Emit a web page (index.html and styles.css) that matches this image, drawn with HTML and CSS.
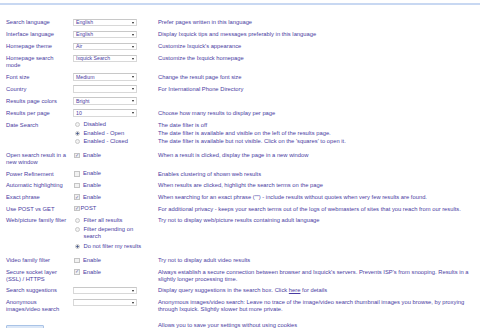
FILE: index.html
```html
<!DOCTYPE html>
<html lang="en">
<head>
    <meta charset="UTF-8">
    <title>Ixquick Settings</title>
    <link rel="stylesheet" href="styles.css">
</head>
<body>
    <div class="topline"></div>
    <div class="settings">
        <div class="row">
            <div class="label">Search language</div>
            <div class="control"><div class="select"><span>English</span><span class="arrow"></span></div></div>
            <div class="desc">Prefer pages written in this language</div>
        </div>
        <div class="row">
            <div class="label">Interface language</div>
            <div class="control"><div class="select"><span>English</span><span class="arrow"></span></div></div>
            <div class="desc">Display Ixquick tips and messages preferably in this language</div>
        </div>
        <div class="row">
            <div class="label">Homepage theme</div>
            <div class="control"><div class="select"><span>Air</span><span class="arrow"></span></div></div>
            <div class="desc">Customize Ixquick's appearance</div>
        </div>
        <div class="row">
            <div class="label">Homepage search<br>mode</div>
            <div class="control"><div class="select"><span>Ixquick Search</span><span class="arrow"></span></div></div>
            <div class="desc">Customize the Ixquick homepage</div>
        </div>
        <div class="row">
            <div class="label">Font size</div>
            <div class="control"><div class="select"><span>Medium</span><span class="arrow"></span></div></div>
            <div class="desc">Change the result page font size</div>
        </div>
        <div class="row">
            <div class="label">Country</div>
            <div class="control"><div class="select"><span></span><span class="arrow"></span></div></div>
            <div class="desc">For International Phone Directory</div>
        </div>
        <div class="row">
            <div class="label">Results page colors</div>
            <div class="control"><div class="select"><span>Bright</span><span class="arrow"></span></div></div>
            <div class="desc"></div>
        </div>
        <div class="row">
            <div class="label">Results per page</div>
            <div class="control"><div class="select"><span>10</span><span class="arrow"></span></div></div>
            <div class="desc">Choose how many results to display per page</div>
        </div>
        <div class="row group date">
            <div class="label">Date Search</div>
            <div class="control">
                <div class="option"><span class="radio"></span><span>Disabled</span></div>
                <div class="option"><span class="radio on"></span><span>Enabled - Open</span></div>
                <div class="option"><span class="radio"></span><span>Enabled - Closed</span></div>
            </div>
            <div class="desc">
                <div class="line">The date filter is off</div>
                <div class="line">The date filter is available and visible on the left of the results page.</div>
                <div class="line">The date filter is available but not visible. Click on the 'squares' to open it.</div>
            </div>
        </div>
        <div class="row">
            <div class="label">Open search result in a<br>new window</div>
            <div class="control"><div class="option"><span class="check on">&#10003;</span><span>Enable</span></div></div>
            <div class="desc">When a result is clicked, display the page in a new window</div>
        </div>
        <div class="row">
            <div class="label">Power Refinement</div>
            <div class="control"><div class="option"><span class="check"></span><span>Enable</span></div></div>
            <div class="desc">Enables clustering of shown web results</div>
        </div>
        <div class="row">
            <div class="label">Automatic highlighting</div>
            <div class="control"><div class="option"><span class="check"></span><span>Enable</span></div></div>
            <div class="desc">When results are clicked, highlight the search terms on the page</div>
        </div>
        <div class="row">
            <div class="label">Exact phrase</div>
            <div class="control"><div class="option"><span class="check on">&#10003;</span><span>Enable</span></div></div>
            <div class="desc">When searching for an exact phrase ("") - include results without quotes when very few results are found.</div>
        </div>
        <div class="row">
            <div class="label">Use POST vs GET</div>
            <div class="control"><div class="option tight"><span class="check on">&#10003;</span><span>POST</span></div></div>
            <div class="desc">For additional privacy - keeps your search terms out of the logs of webmasters of sites that you reach from our results.</div>
        </div>
        <div class="row group family">
            <div class="label">Web/picture family filter</div>
            <div class="control">
                <div class="option"><span class="radio"></span><span>Filter all results</span></div>
                <div class="option"><span class="radio"></span><span>Filter depending on<br>search</span></div>
                <div class="option"><span class="radio on"></span><span>Do not filter my results</span></div>
            </div>
            <div class="desc">Try not to display web/picture results containing adult language</div>
        </div>
        <div class="row">
            <div class="label">Video family filter</div>
            <div class="control"><div class="option"><span class="check"></span><span>Enable</span></div></div>
            <div class="desc">Try not to display adult video results</div>
        </div>
        <div class="row">
            <div class="label">Secure socket layer<br>(SSL) / HTTPS</div>
            <div class="control"><div class="option"><span class="check on">&#10003;</span><span>Enable</span></div></div>
            <div class="desc">Always establish a secure connection between browser and Ixquick's servers. Prevents ISP's from snooping. Results in a<br>slightly longer processing time.</div>
        </div>
        <div class="row">
            <div class="label">Search suggestions</div>
            <div class="control"><div class="select"><span></span><span class="arrow"></span></div></div>
            <div class="desc">Display query suggestions in the search box. Click <a href="#">here</a> for details</div>
        </div>
        <div class="row">
            <div class="label">Anonymous<br>images/video search</div>
            <div class="control"><div class="select"><span></span><span class="arrow"></span></div></div>
            <div class="desc">Anonymous images/video search: Leave no trace of the image/video search thumbnail images you browse, by proxying<br>through Ixquick. Slightly slower but more private.</div>
        </div>
        <div class="row last">
            <div class="label"><button class="save"></button></div>
            <div class="control"></div>
            <div class="desc">Allows you to save your settings without using cookies</div>
        </div>
    </div>
</body>
</html>
```

FILE: styles.css
```css
body {
    margin: 0;
    font-family: 'Liberation Sans', Arial, sans-serif;
    font-size: 5.8px;
    line-height: 6.7px;
    color: #4a3ca2;
    background: #fff;
    overflow: hidden;
}
.topline {
    height: 2px;
    margin-top: 3px;
    background: #c8d8f2; /* pale blue rule under the header */
}
.settings {
    padding: 14px 4px 0 6px;
}
.row {
    display: grid;
    grid-template-columns: 67px 85px 1fr;
    margin-bottom: 4.6px;
}
.row.date {
    margin-bottom: 7px;
}
.row.family {
    margin-bottom: 7.6px;
}
.row.last {
    margin-top: 9px;
}
.label,
.desc {
    padding-top: 0.35px;
    white-space: nowrap;
}
.desc a {
    color: #4a3ca2;
}
.select {
    display: flex;
    align-items: center;
    justify-content: space-between;
    box-sizing: border-box;
    width: 64px;
    height: 7.4px;
    padding: 0 2px 0 2px;
    border: 1px solid #d8d8d8;
    border-top-color: #c8c8c8;
    background: #fff;
    font-size: 5.2px;
    white-space: nowrap;
}
.arrow {
    width: 0;
    height: 0;
    border-left: 1.5px solid transparent;
    border-right: 1.5px solid transparent;
    border-top: 2px solid #222;
}
.option {
    display: flex;
    align-items: flex-start;
    margin-bottom: 1.7px;
    white-space: nowrap;
}
.family .option {
    margin-bottom: 2.8px;
}
.option:last-child,
.family .option:last-child {
    margin-bottom: 0;
}
.date .desc .line {
    margin-bottom: 1.7px;
}
.date .desc .line:last-child {
    margin-bottom: 0;
}
.check {
    display: flex;
    justify-content: center;
    align-items: center;
    box-sizing: border-box;
    width: 5.5px;
    height: 5.5px;
    margin: 0.6px 3.5px 0 1px;
    border: 1px solid #c4c4c4;
    background: #f2f2f2;
    color: #6a6aa6;
    font-size: 5px;
    line-height: 1;
}
.tight .check {
    margin-right: 1px;
}
.radio {
    box-sizing: border-box;
    width: 5px;
    height: 5px;
    margin: 0.9px 3.5px 0 2px;
    border: 1px solid #c8c8c8;
    border-radius: 50%;
    background: #f2f2f2;
}
.radio.on {
    background: radial-gradient(circle, #4b5c8c 45%, #f2f2f2 55%);
}
.save {
    display: block;
    width: 38px;
    height: 16px;
    margin: 3.2px 0 0 0;
    border: 1px solid #a9c3e6;
    border-radius: 1px;
    background: #dbe7f7;
}
```
